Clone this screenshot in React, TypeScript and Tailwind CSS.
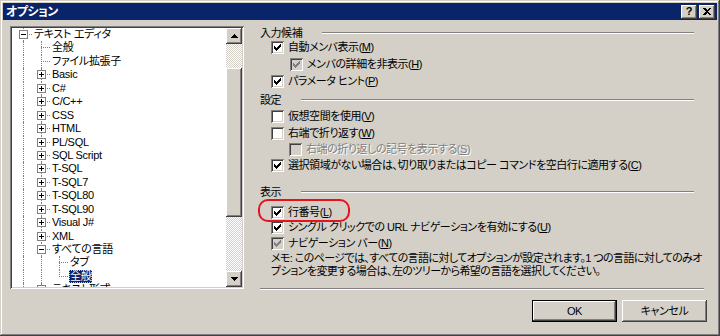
import React from 'react';

type Guide = 'line' | 'tee' | 'elbow';

interface TreeRow {
  guides: Guide[];
  box?: 'plus' | 'minus';
  label: string;
  selected?: boolean;
}

const rows: TreeRow[] = [
  { guides: ['tee'], box: 'minus', label: 'テキスト エディタ' },
  { guides: ['line', 'tee'], label: '全般' },
  { guides: ['line', 'tee'], label: 'ファイル拡張子' },
  ...['Basic', 'C#', 'C/C++', 'CSS', 'HTML', 'PL/SQL', 'SQL Script', 'T-SQL', 'T-SQL7', 'T-SQL80', 'T-SQL90', 'Visual J#', 'XML'].map(
    (label): TreeRow => ({ guides: ['line', 'tee'], box: 'plus', label })
  ),
  { guides: ['line', 'tee'], box: 'minus', label: 'すべての言語' },
  { guides: ['line', 'line', 'tee'], label: 'タブ' },
  { guides: ['line', 'line', 'elbow'], label: '全般', selected: true },
  { guides: ['line', 'tee'], box: 'plus', label: 'テキスト形式' },
];

const raised = 'shadow-[inset_-1px_-1px_0_#404040,inset_1px_1px_0_#fff,inset_-2px_-2px_0_#808080]';
const sunken = 'shadow-[inset_1px_1px_0_#808080,inset_-1px_-1px_0_#fff,inset_2px_2px_0_#404040,inset_-2px_-2px_0_#d4d0c8]';
const checker =
  '[background-image:conic-gradient(#fff_25%,#d4d0c8_0_50%,#fff_0_75%,#d4d0c8_0)] [background-size:2px_2px]';

const Gutter = ({ kind, box }: { kind: Guide; box?: 'plus' | 'minus' }) => (
  <span className="relative w-[18px] h-full shrink-0">
    {kind !== 'elbow' && (
      <span className="absolute left-[9px] top-0 bottom-0 border-l border-dotted border-[#808080]" />
    )}
    {kind === 'elbow' && (
      <span className="absolute left-[9px] top-0 h-[7px] border-l border-dotted border-[#808080]" />
    )}
    {kind !== 'line' && (
      <span className="absolute left-[9px] right-0 top-[6px] border-t border-dotted border-[#808080]" />
    )}
    {box && (
      <span className="absolute left-[5px] top-[2px] w-[9px] h-[9px] border border-[#808080] bg-white">
        <span className="absolute left-[1px] top-[3px] w-[5px] h-[1px] bg-black" />
        {box === 'plus' && <span className="absolute left-[3px] top-[1px] w-[1px] h-[5px] bg-black" />}
      </span>
    )}
  </span>
);

const CheckMark = ({ color }: { color: string }) => (
  <svg width="7" height="7" viewBox="0 0 7 7" shapeRendering="crispEdges" className="absolute left-[3px] top-[3px]">
    {[2, 3, 4, 3, 2, 1, 0].map((t, i) => (
      <rect key={i} x={i} y={t} width="1" height="3" fill={color} />
    ))}
  </svg>
);

const Checkbox = ({ checked, disabled }: { checked?: boolean; disabled?: boolean }) => (
  <span className={`relative w-[13px] h-[13px] shrink-0 ${sunken} ${disabled ? 'bg-[#d4d0c8]' : 'bg-white'}`}>
    {checked && <CheckMark color={disabled ? '#808080' : '#000'} />}
  </span>
);

const CheckRow = ({
  checked,
  disabled,
  grayText,
  className,
  children,
}: {
  checked?: boolean;
  disabled?: boolean;
  grayText?: boolean;
  className: string;
  children: React.ReactNode;
}) => (
  <div className={`flex items-center h-[14px] whitespace-nowrap ${className}`}>
    <Checkbox checked={checked} disabled={disabled} />
    <span className={`ml-[4px] ${grayText ? 'text-[#808080] [text-shadow:1px_1px_0_#fff]' : ''}`}>{children}</span>
  </div>
);

const Header = ({ label, className }: { label: string; className: string }) => (
  <div className={`flex items-center h-[14px] ${className}`}>
    <span>{label}</span>
    <span className="flex-1 ml-[20px] mr-[10px] border-t border-[#808080] border-b border-b-white" />
  </div>
);

const Arrow = ({ down }: { down?: boolean }) => (
  <svg width="7" height="4" viewBox="0 0 7 4" shapeRendering="crispEdges">
    {down ? <path d="M0 0h7L3.5 4z" fill="#000" /> : <path d="M0 4h7L3.5 0z" fill="#000" />}
  </svg>
);

export default function App() {
  return (
    <div
      className={`relative w-[720px] h-[336px] overflow-hidden bg-[#d4d0c8] p-[3px] flex flex-col text-[11px] tracking-[-0.45px] text-black font-['Liberation_Sans','Noto_Sans_CJK_JP',sans-serif] [font-feature-settings:'palt'] shadow-[inset_-1px_-1px_0_#404040,inset_1px_1px_0_#d4d0c8,inset_-2px_-2px_0_#808080,inset_2px_2px_0_#fff]`}
    >
      {/* title bar */}
      <div className="h-[17px] shrink-0 bg-[#0a246a] flex items-center justify-between pl-[3px] pr-[2px]">
        <span className="text-white font-bold text-[12px] leading-none tracking-[-0.5px]">オプション</span>
        <div className="flex gap-[2px]">
          <span className={`w-[16px] h-[14px] bg-[#d4d0c8] ${raised} flex items-center justify-center text-[11px] font-bold leading-none`}>
            ?
          </span>
          <span className={`w-[16px] h-[14px] bg-[#d4d0c8] ${raised} flex items-center justify-center`}>
            <svg width="8" height="7" viewBox="0 0 8 7" shapeRendering="crispEdges">
              <path d="M0 0h2l2 2 2-2h2L5 3.5 8 7H6L4 5 2 7H0l3-3.5z" fill="#000" />
            </svg>
          </span>
        </div>
      </div>

      {/* body */}
      <div className="flex items-start pt-[6px] pl-[7px]">
        {/* tree */}
        <div className={`w-[234px] h-[263px] shrink-0 bg-white p-[2px] flex ${sunken}`}>
          <div className="flex-1 h-full overflow-hidden pl-[2px] tracking-[-0.3px]">
            {rows.map((r, i) => (
              <div key={i} className="flex items-stretch h-[13.45px] whitespace-nowrap">
                {r.guides.map((g, j) => (
                  <Gutter key={j} kind={g} box={j === r.guides.length - 1 ? r.box : undefined} />
                ))}
                <span
                  className={`ml-[1px] px-[1px] h-[13px] flex items-center leading-none ${
                    r.selected ? 'bg-[#0a246a] text-white outline outline-1 outline-dotted outline-[#c8c8c8] -outline-offset-1' : ''
                  }`}
                >
                  {r.label}
                </span>
              </div>
            ))}
          </div>
          {/* scrollbar */}
          <div className="w-[16px] h-full flex flex-col">
            <span className={`h-[16px] shrink-0 bg-[#d4d0c8] ${raised} flex items-center justify-center`}>
              <Arrow />
            </span>
            <span className={`h-[24px] shrink-0 ${checker}`} />
            <span className={`h-[149px] shrink-0 bg-[#d4d0c8] ${raised}`} />
            <span className={`flex-1 ${checker}`} />
            <span className={`h-[16px] shrink-0 bg-[#d4d0c8] ${raised} flex items-center justify-center`}>
              <Arrow down />
            </span>
          </div>
        </div>

        {/* options */}
        <div className="w-[444px] h-[265px] ml-[16px] flex flex-col">
          <Header label="入力候補" className="" />
          <CheckRow checked className="pl-[11px]">
            自動メンバ表示(<u>M</u>)
          </CheckRow>
          <CheckRow checked disabled className="pl-[30px] mt-[3px]">
            メンバの詳細を非表示(<u>H</u>)
          </CheckRow>
          <CheckRow checked className="pl-[11px] mt-[3px]">
            パラメータ ヒント(<u>P</u>)
          </CheckRow>

          <Header label="設定" className="mt-[5px]" />
          <CheckRow className="pl-[11px] mt-[2px]">
            仮想空間を使用(<u>V</u>)
          </CheckRow>
          <CheckRow className="pl-[11px] mt-[3px]">
            右端で折り返す(<u>W</u>)
          </CheckRow>
          <CheckRow disabled grayText className="pl-[29px] mt-[2px]">
            右端の折り返しの記号を表示する(<u>S</u>)
          </CheckRow>
          <CheckRow checked className="pl-[11px] mt-[2px]">
            選択領域がない場合は、切り取りまたはコピー コマンドを空白行に適用する(<u>C</u>)
          </CheckRow>

          <Header label="表示" className="mt-[13px]" />
          <CheckRow checked className="pl-[11px] mt-[6px]">
            行番号(<u>L</u>)
          </CheckRow>
          <CheckRow checked className="pl-[11px] mt-[1px]">
            シングル クリックでの URL ナビゲーションを有効にする(<u>U</u>)
          </CheckRow>
          <CheckRow checked disabled className="pl-[11px] mt-[2px]">
            ナビゲーション バー(<u>N</u>)
          </CheckRow>

          <div className="mt-[2px] pl-[11px] leading-[13px] whitespace-nowrap tracking-[-0.6px]">
            <div>メモ: このページでは、すべての言語に対してオプションが設定されます。1 つの言語に対してのみオ</div>
            <div>プションを変更する場合は、左のツリーから希望の言語を選択してください。</div>
          </div>

          <div className="mt-auto mb-[1px] border-t border-[#808080] border-b border-b-white" />
        </div>
      </div>

      {/* buttons */}
      <div className="flex justify-end gap-[5px] pr-[10px] mt-[9px]">
        <button className="w-[85px] h-[22px] border border-black bg-[#d4d0c8] shadow-[inset_-1px_-1px_0_#404040,inset_1px_1px_0_#fff,inset_-2px_-2px_0_#808080] flex items-center justify-center">
          OK
        </button>
        <button className={`w-[85px] h-[22px] bg-[#d4d0c8] ${raised} flex items-center justify-center`}>
          キャンセル
        </button>
      </div>

      {/* red annotation */}
      <span className="absolute left-[258px] top-[199px] w-[92px] h-[23px] border-2 border-[#e5141c] rounded-[10px] pointer-events-none" />
    </div>
  );
}
